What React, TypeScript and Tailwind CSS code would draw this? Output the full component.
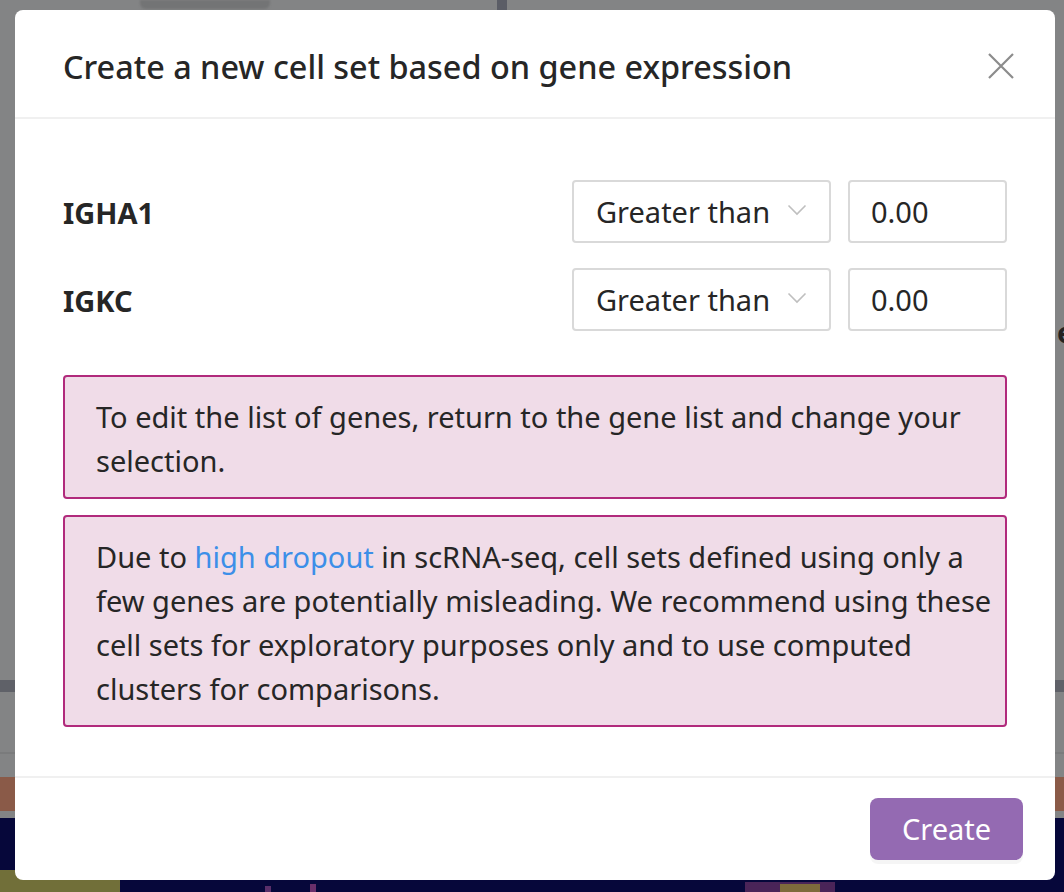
import React from 'react';

const font = { fontFamily: '"Noto Sans", "Open Sans", sans-serif' };

function Chevron() {
  return (
    <svg width="20" height="12" viewBox="0 0 20 12" fill="none" className="mb-[4px] shrink-0">
      <path d="M1.5 1.5 L10 10 L18.5 1.5" stroke="#bfbfbf" strokeWidth="1.6" />
    </svg>
  );
}

function GeneRow({ gene }: { gene: string }) {
  return (
    <div className="flex items-center">
      <div className="flex-1 pt-[3px] text-[29px] font-bold text-[#262626]">{gene}</div>
      <div className="flex h-[63px] w-[259px] items-center justify-between rounded-[4px] border-2 border-[#d9d9d9] pl-[22px] pr-[22px] text-[29px] text-[#262626]">
        <span>Greater than</span>
        <Chevron />
      </div>
      <div className="ml-[17px] flex h-[63px] w-[159px] items-center rounded-[4px] border-2 border-[#d9d9d9] pl-[21px] text-[29px] text-[#262626]">
        0.00
      </div>
    </div>
  );
}

export default function App() {
  return (
    <div className="relative h-[892px] w-[1064px] overflow-hidden bg-[#838485]" style={font}>
      {/* what is behind the overlay */}
      <div aria-hidden="true" className="absolute left-[140px] top-0 h-[9px] w-[130px] rounded-b-md bg-[#737475] blur-[1px]"></div>
      <div aria-hidden="true" className="absolute left-[497px] top-0 h-[10px] w-[10px] bg-[#5b5d66]"></div>
      <div aria-hidden="true" className="absolute left-0 top-[680px] h-[12px] w-full bg-[#5f6168]"></div>
      <div aria-hidden="true" className="absolute left-0 top-[752px] h-[2px] w-full bg-[#7a7b7c]"></div>
      <div aria-hidden="true" className="absolute left-0 top-[777px] h-[34px] w-full bg-[#8a5a48]"></div>
      <div aria-hidden="true" className="absolute bottom-0 left-0 top-[818px] w-full bg-[#06073a]"></div>
      <div aria-hidden="true" className="absolute bottom-0 left-0 h-[22px] w-[120px] bg-[#8c8a3a] opacity-80"></div>
      <div aria-hidden="true" className="absolute bottom-0 left-[265px] h-[6px] w-[6px] bg-[#5a2f6a]"></div>
      <div aria-hidden="true" className="absolute bottom-0 left-[310px] h-[8px] w-[6px] bg-[#6a2f6a]"></div>
      <div aria-hidden="true" className="absolute bottom-0 left-[745px] h-[10px] w-[90px] bg-[#4a2458]"></div>
      <div aria-hidden="true" className="absolute bottom-0 left-[780px] h-[8px] w-[40px] bg-[#7d6a3c]"></div>
      <div aria-hidden="true" className="absolute left-[1057px] top-[318px] text-[28px] font-bold leading-none text-[#222]">e</div>

      {/* modal */}
      <div className="relative ml-[15px] mt-[10px] flex h-[870px] w-[1040px] flex-col rounded-[8px] bg-white">
        <div className="flex h-[109px] items-center justify-between border-b-2 border-[#f0f0f0] px-[48px] pt-[5px]">
          <h2 className="text-[32.4px] font-medium leading-[44px] text-[#262626]">
            Create a new cell set based on gene expression
          </h2>
          <svg width="26" height="26" viewBox="0 0 26 26" className="mr-[-7px]">
            <path d="M1 1 L25 25 M25 1 L1 25" stroke="#8c8c8c" strokeWidth="2.2" />
          </svg>
        </div>

        <div className="flex flex-1 flex-col px-[48px] pt-[61px]">
          <div className="flex flex-col gap-[25px]">
            <GeneRow gene="IGHA1" />
            <GeneRow gene="IGKC" />
          </div>

          <div className="mt-[44px] flex flex-col gap-[16px] text-[29px] leading-[44px] text-[#262626]">
            <div className="rounded-[4px] border-2 border-[#b12a7c] bg-[#f0dce8] pb-[14px] pl-[31px] pr-[6px] pt-[18px]">
              To edit the list of genes, return to the gene list and change your selection.
            </div>
            <div className="rounded-[4px] border-2 border-[#b12a7c] bg-[#f0dce8] pb-[14px] pl-[31px] pr-[6px] pt-[18px]">
              Due to <span className="text-[#3c8fe8]">high dropout</span> in scRNA-seq, cell sets defined
              using only a few genes are potentially misleading. We recommend using these cell sets for
              exploratory purposes only and to use computed clusters for comparisons.
            </div>
          </div>
        </div>

        <div className="flex h-[104px] items-center justify-end border-t-2 border-[#f0f0f0] px-[32px]">
          <button className="h-[62px] w-[153px] rounded-[8px] bg-[#946ab2] text-[29px] text-white shadow-[0_4px_0_rgba(0,0,0,0.04)]">
            Create
          </button>
        </div>
      </div>
    </div>
  );
}
